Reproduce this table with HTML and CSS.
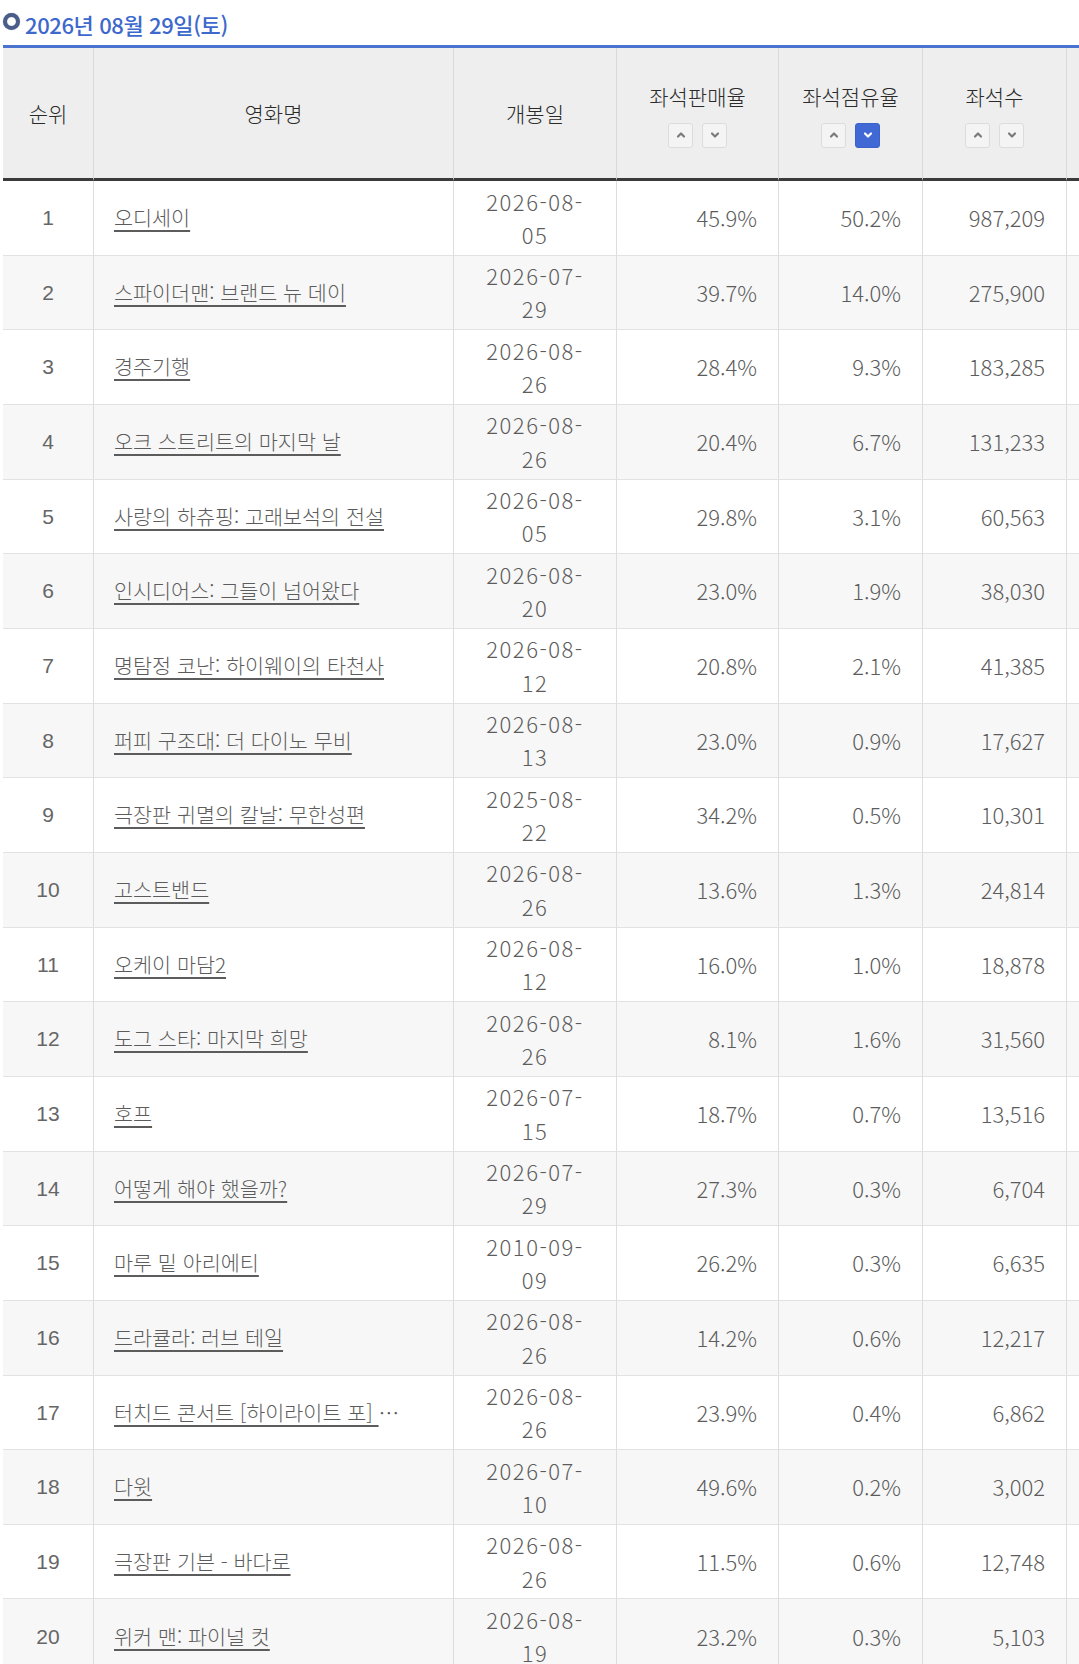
FILE: index.html
```html
<!DOCTYPE html>
<html lang="ko">
<head>
<meta charset="utf-8">
<title>좌석점유율</title>
<link rel="stylesheet" href="styles.css">
</head>
<body>
<div class="wrap">
  <h2 class="title"><span class="ring"></span>2026년 08월 29일(토)</h2>
  <table class="board">
    <colgroup>
      <col class="c-rank"><col class="c-name"><col class="c-date"><col class="c-sale"><col class="c-share"><col class="c-seat"><col class="c-extra">
    </colgroup>
    <thead>
      <tr>
        <th>순위</th>
        <th>영화명</th>
        <th>개봉일</th>
        <th><div class="lbl">좌석판매율</div><div class="sort"><span class="sbtn"><svg viewBox="0 0 12 12"><path d="M3 7.5 L6 4.5 L9 7.5"/></svg></span><span class="sbtn"><svg viewBox="0 0 12 12"><path d="M3 4.5 L6 7.5 L9 4.5"/></svg></span></div></th>
        <th><div class="lbl">좌석점유율</div><div class="sort"><span class="sbtn"><svg viewBox="0 0 12 12"><path d="M3 7.5 L6 4.5 L9 7.5"/></svg></span><span class="sbtn on"><svg viewBox="0 0 12 12"><path d="M3 4.5 L6 7.5 L9 4.5"/></svg></span></div></th>
        <th><div class="lbl">좌석수</div><div class="sort"><span class="sbtn"><svg viewBox="0 0 12 12"><path d="M3 7.5 L6 4.5 L9 7.5"/></svg></span><span class="sbtn"><svg viewBox="0 0 12 12"><path d="M3 4.5 L6 7.5 L9 4.5"/></svg></span></div></th>
        <th></th>
      </tr>
    </thead>
    <tbody>
      <tr><td class="rank">1</td><td class="name"><a href="#">오디세이</a></td><td class="date">2026-08-<br>05</td><td class="num">45.9%</td><td class="num">50.2%</td><td class="num">987,209</td><td></td></tr>
      <tr><td class="rank">2</td><td class="name"><a href="#">스파이더맨: 브랜드 뉴 데이</a></td><td class="date">2026-07-<br>29</td><td class="num">39.7%</td><td class="num">14.0%</td><td class="num">275,900</td><td></td></tr>
      <tr><td class="rank">3</td><td class="name"><a href="#">경주기행</a></td><td class="date">2026-08-<br>26</td><td class="num">28.4%</td><td class="num">9.3%</td><td class="num">183,285</td><td></td></tr>
      <tr><td class="rank">4</td><td class="name"><a href="#">오크 스트리트의 마지막 날</a></td><td class="date">2026-08-<br>26</td><td class="num">20.4%</td><td class="num">6.7%</td><td class="num">131,233</td><td></td></tr>
      <tr><td class="rank">5</td><td class="name"><a href="#">사랑의 하츄핑: 고래보석의 전설</a></td><td class="date">2026-08-<br>05</td><td class="num">29.8%</td><td class="num">3.1%</td><td class="num">60,563</td><td></td></tr>
      <tr><td class="rank">6</td><td class="name"><a href="#">인시디어스: 그들이 넘어왔다</a></td><td class="date">2026-08-<br>20</td><td class="num">23.0%</td><td class="num">1.9%</td><td class="num">38,030</td><td></td></tr>
      <tr><td class="rank">7</td><td class="name"><a href="#">명탐정 코난: 하이웨이의 타천사</a></td><td class="date">2026-08-<br>12</td><td class="num">20.8%</td><td class="num">2.1%</td><td class="num">41,385</td><td></td></tr>
      <tr><td class="rank">8</td><td class="name"><a href="#">퍼피 구조대: 더 다이노 무비</a></td><td class="date">2026-08-<br>13</td><td class="num">23.0%</td><td class="num">0.9%</td><td class="num">17,627</td><td></td></tr>
      <tr><td class="rank">9</td><td class="name"><a href="#">극장판 귀멸의 칼날: 무한성편</a></td><td class="date">2025-08-<br>22</td><td class="num">34.2%</td><td class="num">0.5%</td><td class="num">10,301</td><td></td></tr>
      <tr><td class="rank">10</td><td class="name"><a href="#">고스트밴드</a></td><td class="date">2026-08-<br>26</td><td class="num">13.6%</td><td class="num">1.3%</td><td class="num">24,814</td><td></td></tr>
      <tr><td class="rank">11</td><td class="name"><a href="#">오케이 마담2</a></td><td class="date">2026-08-<br>12</td><td class="num">16.0%</td><td class="num">1.0%</td><td class="num">18,878</td><td></td></tr>
      <tr><td class="rank">12</td><td class="name"><a href="#">도그 스타: 마지막 희망</a></td><td class="date">2026-08-<br>26</td><td class="num">8.1%</td><td class="num">1.6%</td><td class="num">31,560</td><td></td></tr>
      <tr><td class="rank">13</td><td class="name"><a href="#">호프</a></td><td class="date">2026-07-<br>15</td><td class="num">18.7%</td><td class="num">0.7%</td><td class="num">13,516</td><td></td></tr>
      <tr><td class="rank">14</td><td class="name"><a href="#">어떻게 해야 했을까?</a></td><td class="date">2026-07-<br>29</td><td class="num">27.3%</td><td class="num">0.3%</td><td class="num">6,704</td><td></td></tr>
      <tr><td class="rank">15</td><td class="name"><a href="#">마루 밑 아리에티</a></td><td class="date">2010-09-<br>09</td><td class="num">26.2%</td><td class="num">0.3%</td><td class="num">6,635</td><td></td></tr>
      <tr><td class="rank">16</td><td class="name"><a href="#">드라큘라: 러브 테일</a></td><td class="date">2026-08-<br>26</td><td class="num">14.2%</td><td class="num">0.6%</td><td class="num">12,217</td><td></td></tr>
      <tr><td class="rank">17</td><td class="name"><a href="#">터치드 콘서트 [하이라이트 포] </a>…</td><td class="date">2026-08-<br>26</td><td class="num">23.9%</td><td class="num">0.4%</td><td class="num">6,862</td><td></td></tr>
      <tr><td class="rank">18</td><td class="name"><a href="#">다윗</a></td><td class="date">2026-07-<br>10</td><td class="num">49.6%</td><td class="num">0.2%</td><td class="num">3,002</td><td></td></tr>
      <tr><td class="rank">19</td><td class="name"><a href="#">극장판 기븐 - 바다로</a></td><td class="date">2026-08-<br>26</td><td class="num">11.5%</td><td class="num">0.6%</td><td class="num">12,748</td><td></td></tr>
      <tr><td class="rank">20</td><td class="name"><a href="#">위커 맨: 파이널 컷</a></td><td class="date">2026-08-<br>19</td><td class="num">23.2%</td><td class="num">0.3%</td><td class="num">5,103</td><td></td></tr>
    </tbody>
  </table>
</div>
</body>
</html>
```

FILE: styles.css
```css
html {
  overflow: hidden;
}
body {
  margin: 0;
  background: #ffffff;
  font-family: "Noto Sans CJK KR", "Noto Sans", sans-serif;
  color: #555555;
}
.wrap {
  padding-left: 3px;
  width: 1213px;
}
.title {
  margin: 0;
  height: 45px;
  display: flex;
  align-items: center;
  gap: 5px;
  font-size: 22px;
  font-weight: 500;
  color: #3d68cc;
  letter-spacing: -0.4px;
  padding-top: 2px;
  box-sizing: border-box;
}
.ring {
  width: 9px;
  height: 9px;
  border-radius: 50%;
  border: 4px solid #4b5c88;
  background: #ffffff;
  box-shadow: 0 0 1px #8a9bc4, inset 0 0 1px #8a9bc4;
  margin-top: -4px;
}
.board {
  border-collapse: separate;
  border-spacing: 0;
  table-layout: fixed;
  width: 1213px;
  border-top: 3px solid #4a72d0;
}
.c-rank { width: 90px; }
.c-name { width: 360px; }
.c-date { width: 163px; }
.c-sale { width: 162px; }
.c-share { width: 144px; }
.c-seat { width: 144px; }
.c-extra { width: 150px; }

.board th {
  height: 130px;
  background: #eeeeee;
  border-bottom: 3px solid #3a3a3a;
  border-left: 1px solid #d9d9d9;
  font-weight: 300;
  font-size: 21px;
  color: #2a2a2a;
  line-height: 38px;
  padding: 0;
  vertical-align: middle;
  text-align: center;
}
.board th:first-child {
  border-left: none;
}
.lbl {
  line-height: 34px;
}
.sort {
  display: flex;
  justify-content: center;
  gap: 9px;
  margin-top: 10px;
  height: 25px;
}
.sbtn {
  width: 25px;
  height: 25px;
  box-sizing: border-box;
  border: 1px solid #dcdcdc;
  border-radius: 3px;
  background: #f4f4f4;
  display: flex;
  align-items: center;
  justify-content: center;
}
.sbtn svg {
  width: 12px;
  height: 12px;
  fill: none;
  stroke: #7a7a7a;
  stroke-width: 2.2;
  stroke-linecap: round;
  stroke-linejoin: round;
}
.sbtn.on {
  background: #4169d6;
  border-color: #3b62c8;
}
.sbtn.on svg {
  stroke: #ffffff;
}

.board td {
  padding: 3.5px 0;
  line-height: 33.33px;
  font-size: 22px;
  font-weight: 300;
  border-bottom: 1px solid #e2e2e2;
  border-left: 1px solid #dddddd;
  vertical-align: middle;
  color: #5c5c5c;
}
.board td:first-child {
  border-left: none;
}
.board tbody tr:nth-child(even) td {
  background: #f7f7f7;
}
.board td.rank {
  text-align: center;
  font-family: "Liberation Sans", Arial, sans-serif;
  font-weight: 400;
  font-size: 21px;
  color: #666666;
}
.board td.name {
  padding-left: 20px;
  white-space: nowrap;
  overflow: hidden;
  font-size: 20.7px;
}
.name a {
  color: #5c5c5c;
  text-decoration: underline;
  text-underline-offset: 4px;
  text-decoration-thickness: 1.5px;
}
.board td.date {
  text-align: center;
  letter-spacing: 1.5px;
}
.board td.num {
  text-align: right;
  padding-right: 21px;
}
```
